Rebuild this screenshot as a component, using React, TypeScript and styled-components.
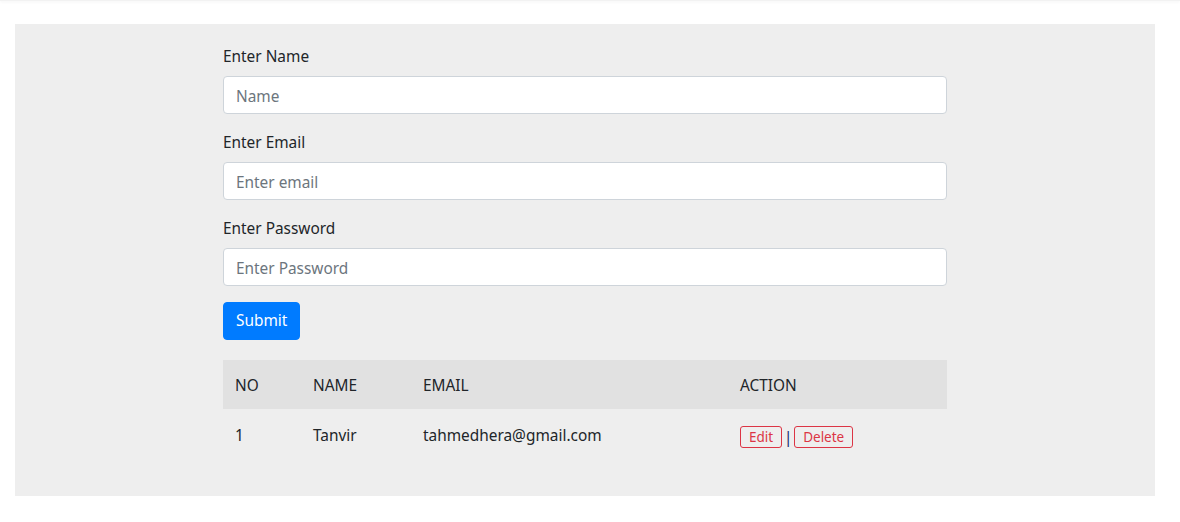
import React from "react";
import styled, { createGlobalStyle } from "styled-components";

const Global = createGlobalStyle`
  * { box-sizing: border-box; }
  html, body { margin: 0; padding: 0; background: #fff; }
  body {
    font-family: "Noto Sans", "Open Sans", sans-serif;
    font-size: 15.4px;
    line-height: 1.5;
    color: #212529;
  }
`;

const TopShade = styled.div`
  height: 1px;
  background: #f2f2f2;
  box-shadow: 0 1px 3px rgba(0, 0, 0, 0.08);
`;

const Panel = styled.div`
  width: 1140px;
  margin: 23px 0 0 15px;
  background: #eeeeee;
  padding: 20px 0 21px;
`;

const Form = styled.form`
  width: 724px;
  margin: 0 auto;
`;

const Group = styled.div`
  margin-bottom: 16px;
  display: flex;
  flex-direction: column;
`;

const Label = styled.label`
  display: block;
  margin-bottom: 8px;
  line-height: 24px;
  padding-top: 1px;
  height: 24px;
`;

const Input = styled.input`
  height: 38px;
  width: 100%;
  padding: 7px 12px 5px;
  font: inherit;
  color: #495057;
  background: #fff;
  border: 1px solid #ced4da;
  border-radius: 4px;
  outline: none;
  &::placeholder { color: #6c757d; }
`;

const SubmitButton = styled.button`
  height: 38px;
  padding: 6px 12px;
  font: inherit;
  color: #fff;
  background: #007bff;
  border: 1px solid #007bff;
  border-radius: 4px;
`;

const Table = styled.table`
  width: 724px;
  margin: 20px auto 16px;
  border-collapse: collapse;
`;

const HeadRow = styled.tr`
  background: #e1e1e1;
`;

const Th = styled.th<{ $w: number }>`
  width: ${(p) => p.$w}px;
  padding: 14px 12px 11px;
  text-align: left;
  font-weight: 400;
  line-height: 24px;
`;

const Td = styled.td`
  padding: 15px 12px 11px;
  line-height: 24px;
  vertical-align: top;
`;

const Actions = styled.div`
  display: flex;
  align-items: center;
  padding-top: 2px;
`;

const OutlineDanger = styled.button`
  height: 22px;
  padding: 0 8px;
  font-family: inherit;
  font-size: 13.5px;
  line-height: 20px;
  color: #dc3545;
  background: transparent;
  border: 1px solid #dc3545;
  border-radius: 3px;
`;

const Sep = styled.span`
  width: 12px;
  text-align: center;
  color: #1a2a6c;
  font-size: 16px;
  line-height: 20px;
`;

export default function App() {
  return (
    <>
      <Global />
      <TopShade />
      <Panel>
        <Form onSubmit={(e) => e.preventDefault()}>
          <Group>
            <Label>Enter Name</Label>
            <Input placeholder="Name" />
          </Group>
          <Group>
            <Label>Enter Email</Label>
            <Input placeholder="Enter email" />
          </Group>
          <Group>
            <Label>Enter Password</Label>
            <Input type="password" placeholder="Enter Password" />
          </Group>
          <SubmitButton type="submit">Submit</SubmitButton>
        </Form>
        <Table>
          <thead>
            <HeadRow>
              <Th $w={78}>NO</Th>
              <Th $w={110}>NAME</Th>
              <Th $w={317}>EMAIL</Th>
              <Th $w={219}>ACTION</Th>
            </HeadRow>
          </thead>
          <tbody>
            <tr>
              <Td>1</Td>
              <Td>Tanvir</Td>
              <Td>tahmedhera@gmail.com</Td>
              <Td>
                <Actions>
                  <OutlineDanger>Edit</OutlineDanger>
                  <Sep>|</Sep>
                  <OutlineDanger>Delete</OutlineDanger>
                </Actions>
              </Td>
            </tr>
          </tbody>
        </Table>
      </Panel>
    </>
  );
}
